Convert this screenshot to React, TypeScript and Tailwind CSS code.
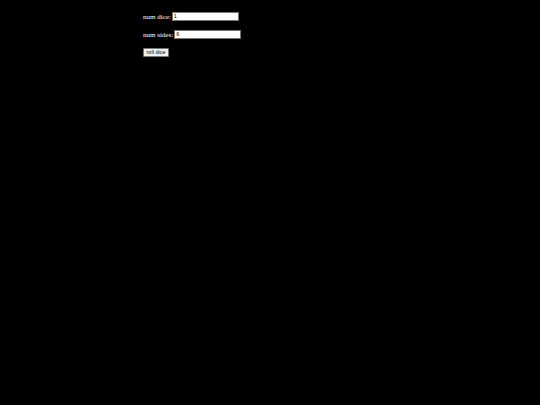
export default function App() {
  return (
    <div className="min-h-screen w-full bg-black text-white pl-[143px] pt-[12px] antialiased font-['Liberation_Serif',serif]">
      <div className="flex flex-col items-start gap-[9px] text-[7px] leading-[9px]">
        <label className="flex items-center h-[9px] gap-[1px]">
          <span className="pt-[1px]">num dice:</span>
          <input
            defaultValue="1"
            className="w-[67px] h-[9px] bg-white text-black text-[5.5px] px-[1px] border border-[#767676] outline-none font-['Liberation_Sans',sans-serif]"
          />
        </label>
        <label className="flex items-center h-[9px] gap-[1px]">
          <span className="pt-[1px]">num sides:</span>
          <input
            defaultValue="6"
            className="w-[67px] h-[9px] bg-white text-black text-[5.5px] px-[1px] border border-[#767676] outline-none font-['Liberation_Sans',sans-serif]"
          />
        </label>
        <button className="h-[9px] w-[26px] bg-[#efefef] text-black text-[5.5px] leading-[7px] border border-[#767676] rounded-[1px] flex items-center justify-center font-['Liberation_Sans',sans-serif]">
          roll dice
        </button>
      </div>
    </div>
  );
}
